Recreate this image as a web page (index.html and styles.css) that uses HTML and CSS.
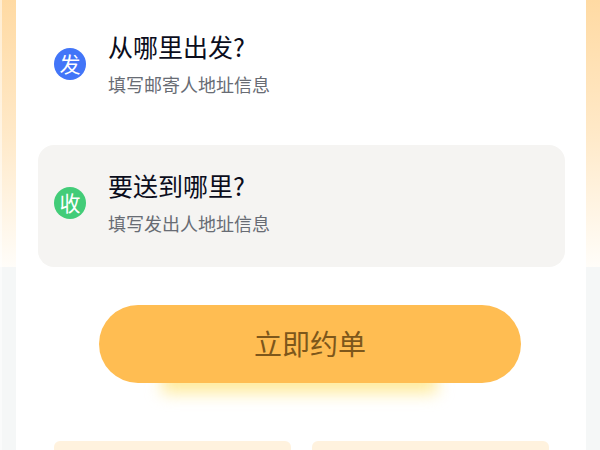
FILE: index.html
```
<!DOCTYPE html>
<html lang="zh-CN">
<head>
    <meta charset="UTF-8">
    <meta name="viewport" content="width=device-width, initial-scale=1.0">
    <title>立即约单</title>
    <link rel="stylesheet" href="styles.css">
</head>
<body>
    <main class="panel">
        <nav class="address-list">
            <a class="address" href="#">
                <span class="badge badge-send">发</span>
                <span class="address-text">
                    <span class="title">从哪里出发?</span>
                    <span class="hint">填写邮寄人地址信息</span>
                </span>
            </a>
            <a class="address address-active" href="#">
                <span class="badge badge-receive">收</span>
                <span class="address-text">
                    <span class="title">要送到哪里?</span>
                    <span class="hint">填写发出人地址信息</span>
                </span>
            </a>
        </nav>

        <button type="button" class="order-btn">立即约单</button>

        <section class="cards">
            <div class="card"></div>
            <div class="card"></div>
        </section>
    </main>
</body>
</html>
```

FILE: styles.css
```
* {
    box-sizing: border-box;
}

body {
    margin: 0;
    padding: 0 14px;
    border-left: 2px solid rgba(255, 255, 255, 0.5);
    font-family: "Noto Sans CJK SC", sans-serif;
    background: linear-gradient(#ffdaa3, #ffe9c8 50%, #fffdf9) 0 0 / 100% 267px no-repeat #f5f7f7;
}

.panel {
    display: flex;
    flex-direction: column;
    min-height: 100vh;
    padding: 6px 21px 0 22px;
    background-color: #fff;
    isolation: isolate;
}

.address-list {
    display: flex;
    flex-direction: column;
    gap: 17px;
}

.address {
    display: flex;
    align-items: center;
    gap: 22px;
    height: 122px;
    padding: 0 16px 6px;
    border-radius: 16px;
    color: #0b0d1c;
    text-decoration: none;
}

.address-active {
    background-color: #f5f4f2;
}

.badge {
    width: 32px;
    height: 32px;
    border-radius: 50%;
    font-size: 21px;
    line-height: 30px;
    text-align: center;
    color: #fff;
}

.badge-send {
    background-color: #4275f8;
}

.badge-receive {
    background-color: #42cc78;
}

.address-text {
    display: flex;
    flex-direction: column;
    gap: 4px;
}

.title {
    font-size: 25px;
    line-height: 36px;
}

.hint {
    font-size: 18px;
    line-height: 32px;
    color: #686c74;
}

.order-btn {
    position: relative;
    height: 78px;
    margin: 38px 44px 0 61px;
    padding: 0 0 2px;
    border: 0;
    border-radius: 39px;
    background-color: #ffbd52;
    font-family: inherit;
    font-size: 28px;
    color: #7d571b;
    cursor: pointer;
}

/* soft glow under the button */
.order-btn::after {
    content: "";
    position: absolute;
    z-index: -1;
    left: 15%;
    right: 20%;
    bottom: -10px;
    height: 30px;
    background-color: #ffeb9c;
    filter: blur(8px);
}

.cards {
    flex: 1;
    display: grid;
    grid-template-columns: 1fr 1fr;
    gap: 21px;
    margin-top: 58px;
    padding: 0 16px;
}

.card {
    border-radius: 6px 6px 0 0;
    background-color: #fff2de;
}
```
